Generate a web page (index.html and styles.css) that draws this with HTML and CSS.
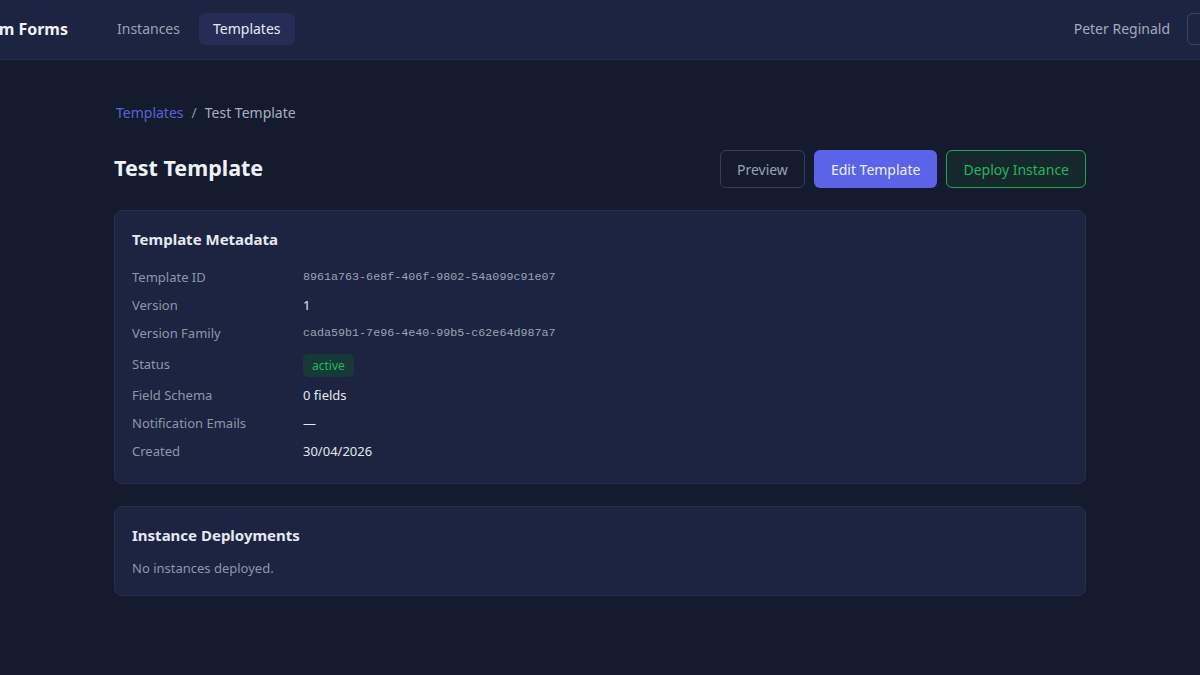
FILE: index.html
```html
<!DOCTYPE html>
<html lang="en">
<head>
  <meta charset="UTF-8" />
  <meta name="viewport" content="width=device-width, initial-scale=1.0" />
  <title>Test Template</title>
  <link rel="stylesheet" href="styles.css">
</head>
<body>
  <header class="topbar">
    <div class="topbar-inner">
      <div class="brand">Custom Forms</div>
      <nav class="nav">
        <a class="nav-link">Instances</a>
        <a class="nav-link active">Templates</a>
      </nav>
      <div class="user">
        <span class="user-name">Peter Reginald</span>
        <button class="btn-logout">Logout</button>
      </div>
    </div>
  </header>

  <main class="page">
    <div class="breadcrumb">
      <a class="crumb-link">Templates</a>
      <span class="crumb-sep">/</span>
      <span class="crumb-current">Test Template</span>
    </div>

    <div class="page-head">
      <h1>Test Template</h1>
      <div class="actions">
        <button class="btn btn-outline">Preview</button>
        <button class="btn btn-primary">Edit Template</button>
        <button class="btn btn-success">Deploy Instance</button>
      </div>
    </div>

    <section class="card">
      <h2>Template Metadata</h2>
      <dl class="meta">
        <dt>Template ID</dt>
        <dd class="mono">8961a763-6e8f-406f-9802-54a099c91e07</dd>
        <dt>Version</dt>
        <dd>1</dd>
        <dt>Version Family</dt>
        <dd class="mono">cada59b1-7e96-4e40-99b5-c62e64d987a7</dd>
        <dt class="tall">Status</dt>
        <dd class="tall"><span class="badge">active</span></dd>
        <dt>Field Schema</dt>
        <dd>0 fields</dd>
        <dt>Notification Emails</dt>
        <dd>—</dd>
        <dt>Created</dt>
        <dd>30/04/2026</dd>
      </dl>
    </section>

    <section class="card">
      <h2>Instance Deployments</h2>
      <p class="empty">No instances deployed.</p>
    </section>
  </main>
</body>
</html>
```

FILE: styles.css
```css
* {
  box-sizing: border-box;
}
body {
  margin: 0;
  font-family: 'Noto Sans', 'Open Sans', sans-serif;
  background: #141b2e;
  color: #e3e7ef;
  overflow-x: hidden;
}
.topbar {
  height: 60px;
  background: #1c2441;
  border-bottom: 1px solid #232c4a;
  display: flex;
  justify-content: center;
  padding-bottom: 2px;
}
.topbar-inner {
  flex: 0 0 1294px;
  display: flex;
  align-items: center;
}
.brand {
  font-size: 16px;
  font-weight: 700;
  color: #f1f3f8;
  margin-right: 35px;
}
.nav {
  display: flex;
  gap: 5px;
}
.nav-link {
  padding: 6px 14px;
  border-radius: 6px;
  font-size: 14px;
  line-height: 20px;
  color: #9aa3b8;
}
.nav-link.active {
  background: #252d56;
  color: #e8ebf4;
}
.user {
  margin-left: auto;
  display: flex;
  align-items: center;
  gap: 17px;
}
.user-name {
  font-size: 14px;
  color: #a3abbf;
}
.btn-logout {
  width: 60px;
  height: 32px;
  padding: 0 0 0 16px;
  text-align: left;
  background: transparent;
  border: 1px solid #3a4462;
  border-radius: 6px;
  color: #a3abbf;
  font-family: inherit;
  font-size: 13px;
  white-space: nowrap;
}
.page {
  max-width: 972px;
  margin: 0 auto;
  padding-top: 43px;
}
.breadcrumb {
  font-size: 14px;
  line-height: 20px;
  display: flex;
  gap: 8px;
  margin-left: 2px;
}
.crumb-link {
  color: #5b62d8;
}
.crumb-sep {
  color: #8c94a9;
}
.crumb-current {
  color: #a7afc2;
}
.page-head {
  display: flex;
  align-items: center;
  justify-content: space-between;
  margin-top: 27px;
  margin-bottom: 22px;
}
h1 {
  margin: 0;
  padding-bottom: 4px;
  font-size: 21.5px;
  font-weight: 700;
  color: #eef1f7;
}
.actions {
  display: flex;
  gap: 9px;
}
.btn {
  height: 38px;
  padding: 0 16px;
  border-radius: 6px;
  font-family: inherit;
  font-size: 14px;
  border: 1px solid transparent;
}
.btn-outline {
  background: transparent;
  border-color: #353e58;
  color: #9aa2b6;
}
.btn-primary {
  background: #5b63e8;
  color: #eef0fb;
}
.btn-success {
  background: #15282c;
  border-color: #25a454;
  color: #28b35d;
}
.card {
  background: #1c2441;
  border: 1px solid #262f4d;
  border-radius: 8px;
  padding: 18px 17px;
  margin-bottom: 22px;
}
h2 {
  margin: 0 0 14px;
  font-size: 15px;
  font-weight: 700;
  color: #e6e9f2;
}
.meta {
  display: grid;
  grid-template-columns: 171px 1fr;
  margin: 0;
  font-size: 13px;
  line-height: 28px;
}
.meta dt {
  color: #8d96ab;
}
.meta dd {
  margin: 0;
  color: #e3e7ef;
}
.meta .tall {
  line-height: 34px;
}
.meta dd.mono {
  font-family: 'Liberation Mono', monospace;
  font-size: 11.7px;
  color: #9aa2b7;
}
.badge {
  display: inline-block;
  padding: 0 9px;
  border-radius: 5px;
  background: #163a37;
  color: #24b85a;
  font-size: 12px;
  line-height: 23px;
  vertical-align: middle;
}
.empty {
  margin: 0;
  font-size: 13px;
  color: #8d96ab;
}
```
